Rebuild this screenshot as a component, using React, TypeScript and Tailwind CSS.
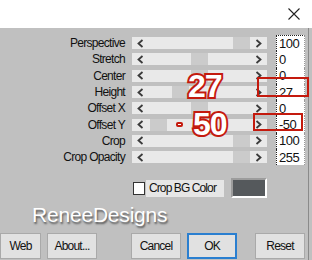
import React from "react";

const rows = [
  { label: "Perspective", value: "100", thumb: 101 },
  { label: "Stretch", value: "0", thumb: 59 },
  { label: "Center", value: "0", thumb: 59 },
  { label: "Height", value: "27", thumb: 40 },
  { label: "Offset X", value: "0", thumb: 59 },
  { label: "Offset Y", value: "-50", thumb: 18 },
  { label: "Crop", value: "100", thumb: 101 },
  { label: "Crop Opacity", value: "255", thumb: 101 },
];

const Chevron = ({ dir }: { dir: "left" | "right" }) => (
  <svg width="7" height="9" viewBox="0 0 7 9" className="shrink-0">
    <polyline
      points={dir === "left" ? "5.5,1 1.5,4.5 5.5,8" : "1.5,1 5.5,4.5 1.5,8"}
      fill="none"
      stroke="#3a3a3a"
      strokeWidth="1.8"
    />
  </svg>
);

const Slider = ({ thumb }: { thumb: number }) => (
  <div className="relative h-[12px] w-[135px] bg-[#e9e9e9] flex items-center justify-between px-[5px]">
    <div className="absolute top-0 h-full w-[17px] bg-[#cbcbcb]" style={{ left: thumb }} />
    <div className="relative"><Chevron dir="left" /></div>
    <div className="relative"><Chevron dir="right" /></div>
  </div>
);

const Btn = ({ children, w, primary }: { children: React.ReactNode; w: number; primary?: boolean }) => (
  <div
    className={
      "h-[26px] flex items-center justify-center bg-[#e1e1e1] text-[12px] tracking-[-0.8px] text-[#111] " +
      (primary ? "border-2 border-[#2a7fd0]" : "border border-[#a9a9a9]")
    }
    style={{ width: w }}
  >
    {children}
  </div>
);

const redNum =
  "absolute font-bold text-white leading-none [-webkit-text-stroke:4px_#c41a0e] [paint-order:stroke_fill] tracking-[-1px]";

export default function App() {
  return (
    <div className="w-[312px] h-[260px] overflow-hidden bg-[#c0c0c0] font-['Liberation_Sans',Arial,sans-serif] relative">
      {/* title bar */}
      <div className="h-[28px] bg-white flex items-center justify-end pr-[12px]">
        <svg width="12" height="12" viewBox="0 0 12 12">
          <path d="M0.5 0.5 L11.5 11.5 M11.5 0.5 L0.5 11.5" stroke="#222" strokeWidth="1.1" />
        </svg>
      </div>

      <div className="h-[232px] border-r border-[#8a8a8a] w-[309px]">
        {/* sliders */}
        <div className="pt-[7px] flex flex-col">
          {rows.map((r, i) => (
            <div key={r.label} className="flex items-center h-[16.3px]">
              <div className="w-[125px] text-right text-[12px] tracking-[-0.7px] text-[#111] leading-none">
                {r.label}
              </div>
              <div className="ml-[7px]">
                <Slider thumb={r.thumb} />
              </div>
              <div
                className={
                  "ml-[9px] w-[29px] h-full bg-white border-l border-l-[#222] border-r border-dotted border-r-[#9a9a9a] text-[13px] tracking-[-0.5px] leading-none flex items-center pl-[2px] text-[#111] " +
                  (i === 0 ? "border-t border-t-[#222]" : "")
                }
              >
                {r.value}
              </div>
            </div>
          ))}
        </div>

        {/* crop bg color */}
        <div className="mt-[13px] flex items-center">
          <div className="ml-[133px] w-[12px] h-[13px] bg-white border border-[#333]" />
          <div className="ml-[1px] w-[78px] h-[17px] bg-[#e6e6e6] text-[12px] tracking-[-0.9px] flex items-center pl-[3px] text-[#111]">
            Crop BG Color
          </div>
          <div className="ml-[7px] w-[36px] h-[20px] bg-[#55595c] border-2 border-t-[#9c9c9c] border-l-[#9c9c9c] border-b-white border-r-white" />
        </div>

        {/* logo */}
        <div className="ml-[32px] mt-[6px] text-[21px] leading-none text-white tracking-[-0.2px] [text-shadow:1px_2px_2px_#555]">
          ReneeDesigns
        </div>

        {/* buttons */}
        <div className="mt-[8px] flex">
          <Btn w={41}>Web</Btn>
          <div className="ml-[6px]"><Btn w={50}>About...</Btn></div>
          <div className="ml-[34px]"><Btn w={50}>Cancel</Btn></div>
          <div className="ml-[6px]"><Btn w={50} primary>OK</Btn></div>
          <div className="ml-[18px]"><Btn w={50}>Reset</Btn></div>
        </div>
      </div>

      {/* red annotations */}
      <div className="absolute left-[257px] top-[77px] w-[52px] h-[20px] border-2 border-[#c41a0e]" />
      <div className="absolute left-[253px] top-[113px] w-[50px] h-[18px] border-2 border-[#c41a0e]" />
      <div className={redNum + " left-[188px] top-[70px] text-[32px]"}>27</div>
      <div className="absolute left-[176px] top-[122px] w-[7px] h-[5px] rounded-[2px] bg-white border-2 border-[#c41a0e]" />
      <div className={redNum + " left-[193px] top-[108px] text-[32px]"}>50</div>
    </div>
  );
}
